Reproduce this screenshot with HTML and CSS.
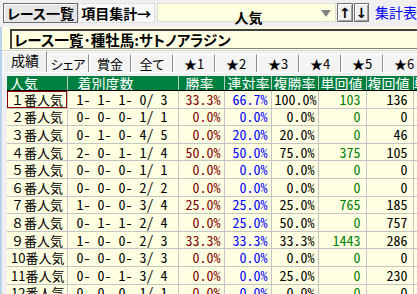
FILE: index.html
```html
<!DOCTYPE html>
<html lang="ja">
<head>
  <meta charset="UTF-8">
  <title>レース一覧</title>
  <link rel="stylesheet" href="styles.css">
</head>
<body>

<!-- Toolbar -->
<div class="toolbar">
  <button class="tb-btn pressed">レース一覧</button>
  <button class="tb-btn light">項目集計→</button>
  <div class="combo">
    <span class="combo-text">人気</span>
    <span class="combo-arrow"></span>
  </div>
  <button class="arrow-btn">↑</button>
  <button class="arrow-btn">↓</button>
  <span class="link">集計表</span>
</div>

<div class="main">
  <!-- Title -->
  <div class="titlebar">
    <div class="title-box">レース一覧･種牡馬:サトノアラジン</div>
  </div>

  <!-- Tabs -->
  <div class="tabs">
    <div class="tab active">成績</div>
    <div class="tab">シェア</div>
    <div class="tab">賞金</div>
    <div class="tab">全て</div>
    <div class="tab">★1</div>
    <div class="tab">★2</div>
    <div class="tab">★3</div>
    <div class="tab">★4</div>
    <div class="tab">★5</div>
    <div class="tab">★6</div>
  </div>

  <!-- Grid -->
  <div class="grid-wrap">
    <table class="grid">
      <colgroup>
        <col style="width:60px">
        <col style="width:111px">
        <col style="width:46px">
        <col style="width:47px">
        <col style="width:47px">
        <col style="width:48px">
        <col style="width:47px">
        <col style="width:50px">
      </colgroup>
      <thead>
        <tr>
          <th class="h1">人気</th>
          <th class="h2">着別度数</th>
          <th class="h3">勝率</th>
          <th class="h4">連対率</th>
          <th class="h5">複勝率</th>
          <th class="h6">単回値</th>
          <th class="h7">複回値</th>
          <th class="h8">単勝</th>
        </tr>
      </thead>
      <tbody>
        <tr><td class="name sel">１番人気</td><td class="count">1- 1- 1- 0/ 3</td><td class="win">33.3%</td><td class="ren">66.7%</td><td class="fuku">100.0%</td><td class="tan">103</td><td class="fret">136</td><td></td></tr>
        <tr><td class="name">２番人気</td><td class="count">0- 0- 0- 1/ 1</td><td class="win">0.0%</td><td class="ren">0.0%</td><td class="fuku">0.0%</td><td class="tan">0</td><td class="fret">0</td><td></td></tr>
        <tr><td class="name">３番人気</td><td class="count">0- 1- 0- 4/ 5</td><td class="win">0.0%</td><td class="ren">20.0%</td><td class="fuku">20.0%</td><td class="tan">0</td><td class="fret">46</td><td></td></tr>
        <tr><td class="name">４番人気</td><td class="count">2- 0- 1- 1/ 4</td><td class="win">50.0%</td><td class="ren">50.0%</td><td class="fuku">75.0%</td><td class="tan">375</td><td class="fret">105</td><td></td></tr>
        <tr><td class="name">５番人気</td><td class="count">0- 0- 0- 1/ 1</td><td class="win">0.0%</td><td class="ren">0.0%</td><td class="fuku">0.0%</td><td class="tan">0</td><td class="fret">0</td><td></td></tr>
        <tr><td class="name">６番人気</td><td class="count">0- 0- 0- 2/ 2</td><td class="win">0.0%</td><td class="ren">0.0%</td><td class="fuku">0.0%</td><td class="tan">0</td><td class="fret">0</td><td></td></tr>
        <tr><td class="name">７番人気</td><td class="count">1- 0- 0- 3/ 4</td><td class="win">25.0%</td><td class="ren">25.0%</td><td class="fuku">25.0%</td><td class="tan">765</td><td class="fret">185</td><td></td></tr>
        <tr><td class="name">８番人気</td><td class="count">0- 1- 1- 2/ 4</td><td class="win">0.0%</td><td class="ren">25.0%</td><td class="fuku">50.0%</td><td class="tan">0</td><td class="fret">757</td><td></td></tr>
        <tr><td class="name">９番人気</td><td class="count">1- 0- 0- 2/ 3</td><td class="win">33.3%</td><td class="ren">33.3%</td><td class="fuku">33.3%</td><td class="tan">1443</td><td class="fret">286</td><td></td></tr>
        <tr><td class="name">10番人気</td><td class="count">0- 0- 0- 3/ 3</td><td class="win">0.0%</td><td class="ren">0.0%</td><td class="fuku">0.0%</td><td class="tan">0</td><td class="fret">0</td><td></td></tr>
        <tr><td class="name">11番人気</td><td class="count">0- 0- 1- 3/ 4</td><td class="win">0.0%</td><td class="ren">0.0%</td><td class="fuku">25.0%</td><td class="tan">0</td><td class="fret">230</td><td></td></tr>
        <tr><td class="name">12番人気</td><td class="count">0- 0- 0- 1/ 1</td><td class="win">0.0%</td><td class="ren">0.0%</td><td class="fuku">0.0%</td><td class="tan">0</td><td class="fret">0</td><td></td></tr>
      </tbody>
    </table>
  </div>
</div>

</body>
</html>
```

FILE: styles.css
```css
body {
  font-family: "Noto Sans CJK JP", sans-serif;
  margin: 0;
  padding: 0;
  width: 417px;
  height: 294px;
  overflow: hidden;
  background-color: #f0f0f0;
  color: #000;
}

/* Toolbar */
.toolbar {
  display: flex;
  align-items: flex-start;
  height: 27px;
  padding: 3px 0 0 3px;
  box-sizing: border-box;
  white-space: nowrap;
  overflow: hidden;
}

.tb-btn {
  font-family: inherit;
  font-size: 14px;
  font-weight: bold;
  height: 20px;
  padding: 0;
  line-height: 16px;
  color: #000;
  cursor: pointer;
  font-feature-settings: "palt";
}

.tb-btn.pressed {
  width: 78px;
  background-color: #e6e6e6;
  border: 1px solid #6d6d6d;
  box-shadow: inset 1px 1px 0 #fff;
}

.tb-btn.light {
  width: 80px;
  background-color: #f9f9f9;
  border: 1px dotted #c8c8c8;
}

.combo {
  position: relative;
  width: 187px;
  height: 19px;
  margin-left: 2px;
  background-color: #ffffe1;
  border: 1px solid #e0e0d0;
  box-sizing: border-box;
  text-align: center;
}

.combo-text {
  font-size: 14px;
  font-weight: bold;
  line-height: 17px;
  margin-left: 4px;
}

.combo-arrow {
  position: absolute;
  right: 4px;
  top: 6px;
  width: 0;
  height: 0;
  border-left: 5px solid transparent;
  border-right: 5px solid transparent;
  border-top: 7px solid #808080;
}

.arrow-btn {
  font-family: "DejaVu Sans", sans-serif;
  font-size: 14px;
  font-weight: bold;
  width: 16px;
  height: 19px;
  padding: 0;
  margin-left: 1px;
  line-height: 14px;
  background-color: #f0f0f0;
  border: 1px solid #707070;
  box-shadow: inset 1px 1px 0 #fff, inset -1px -1px 0 #a0a0a0;
  color: #000;
}

.arrow-btn:first-of-type {
  margin-left: 3px;
}

.link {
  font-size: 14px;
  color: #0000ff;
  margin-left: 6px;
  line-height: 18px;
}

/* Main panel */
.main {
  border-left: 2px solid #b9d1ea;
  height: 267px;
}

.titlebar {
  height: 24px;
  padding: 2px 0 0 8px;
  box-sizing: border-box;
  background-color: #ffffe1;
  border-bottom: 1px solid #d8d8d0;
}

.title-box {
  height: 20px;
  border-top: 2px solid #404040;
  border-left: 2px solid #404040;
  border-bottom: 1px solid #808080;
  box-sizing: border-box;
  padding-left: 2px;
  font-size: 14.5px;
  font-weight: bold;
  line-height: 17px;
  white-space: nowrap;
  overflow: hidden;
  font-feature-settings: "palt";
}

/* Tabs */
.tabs {
  display: flex;
  align-items: flex-end;
  height: 21px;
  padding-left: 1px;
  border-bottom: 1px solid #fff;
}

.tab {
  flex-shrink: 0;
  width: 42px;
  height: 18px;
  box-sizing: border-box;
  border-top: 1px solid #fff;
  border-left: 1px solid #fff;
  border-right: 1px solid #8c8c8c;
  background-color: #f4f4f4;
  font-size: 13px;
  line-height: 17px;
  text-align: center;
  white-space: nowrap;
  font-feature-settings: "palt";
}

.tab.active {
  width: 44px;
  height: 21px;
  line-height: 17px;
  font-size: 14px;
  background-color: #f0f0f0;
}

/* Grid */
.grid-wrap {
  margin: 3px 0 0 5px;
  overflow: hidden;
}

.grid {
  border-collapse: collapse;
  table-layout: fixed;
  width: 456px;
}

.grid th {
  height: 14px;
  padding: 0;
  font-size: 14px;
  font-weight: normal;
  line-height: 14px;
  color: #fff;
  background-color: #00803f;
  text-align: left;
  white-space: nowrap;
  overflow: hidden;
  border-left: 1px solid #b8d0c0;
  border-right: 1px solid #b8d0c0;
  border-bottom: 1px solid #000;
}

.grid th.h1 { padding-left: 3px; border-left: none; }
.grid th.h2 { padding-left: 10px; }
.grid th.h3 { padding-left: 7px; }
.grid th.h4 { padding-left: 3px; }
.grid th.h5 { padding-left: 2px; }
.grid th.h6 { padding-left: 2px; }
.grid th.h7 { padding-left: 1px; }

.grid td {
  height: 16.6px;
  padding: 0 3px;
  font-size: 14px;
  line-height: 15px;
  background-color: #ffffe1;
  border: 1px solid #c4c4c4;
  white-space: pre;
  overflow: hidden;
  text-align: right;
  font-feature-settings: "hwid";
}

.grid td.name {
  text-align: left;
  padding-left: 4px;
  border-left: none;
  font-size: 13px;
  font-feature-settings: normal;
}

.grid td.sel {
  outline: 1px solid #8b0000;
  outline-offset: -1px;
}

.grid td.count {
  padding-right: 10px;
}

.grid td.win {
  color: #800000;
}

.grid td.ren {
  color: #0000ff;
}

.grid td.tan {
  color: #008000;
  padding-right: 5px;
}

.grid td.fret {
  padding-right: 5px;
}
```
